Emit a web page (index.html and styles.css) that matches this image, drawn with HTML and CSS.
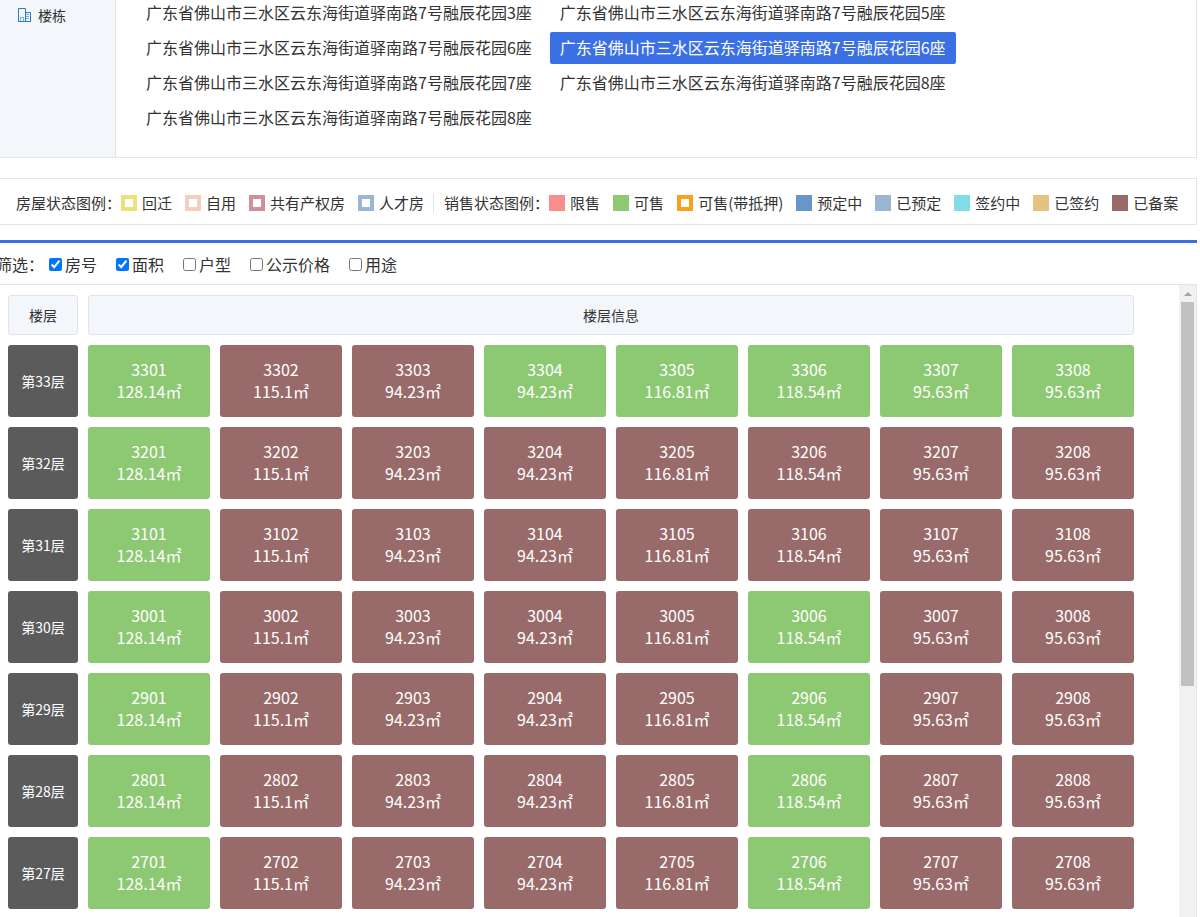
FILE: index.html
```html
<!DOCTYPE html>
<html lang="zh-CN">
<head>
    <meta charset="UTF-8">
    <meta name="viewport" content="width=device-width, initial-scale=1.0">
    <title>楼盘表</title>
    <link rel="stylesheet" href="styles.css">
</head>
<body>
    <section class="buildings">
        <div class="buildings-title">
            <svg class="icon" width="14" height="14" viewBox="0 0 14 14" fill="none" stroke="#2b7cc4" aria-hidden="true">
                <path d="M0.5 13.5V0.5H7.5V13.5M0 13.5H13M7.5 4.5H12.5V13.5"/>
                <path d="M2.5 13V9.5H5.5V13M8 6.5H11M8 8.5H11M8 10.5H11" stroke-opacity="0.6"/>
            </svg>
            <span>楼栋</span>
        </div>
        <nav class="building-list">
            <a href="#">广东省佛山市三水区云东海街道驿南路7号融辰花园3座</a>
            <a href="#">广东省佛山市三水区云东海街道驿南路7号融辰花园5座</a>
            <a href="#">广东省佛山市三水区云东海街道驿南路7号融辰花园6座</a>
            <a href="#" class="active">广东省佛山市三水区云东海街道驿南路7号融辰花园6座</a>
            <a href="#">广东省佛山市三水区云东海街道驿南路7号融辰花园7座</a>
            <a href="#">广东省佛山市三水区云东海街道驿南路7号融辰花园8座</a>
            <a href="#">广东省佛山市三水区云东海街道驿南路7号融辰花园8座</a>
        </nav>
    </section>

    <section class="legend">
        <div class="legend-group">
            <span>房屋状态图例：</span>
            <ul>
                <li><i class="swatch hollow moved-back"></i>回迁</li>
                <li><i class="swatch hollow self-use"></i>自用</li>
                <li><i class="swatch hollow shared"></i>共有产权房</li>
                <li><i class="swatch hollow talent"></i>人才房</li>
            </ul>
        </div>
        <div class="legend-group">
            <span>销售状态图例：</span>
            <ul>
                <li><i class="swatch limited"></i>限售</li>
                <li><i class="swatch on-sale"></i>可售</li>
                <li><i class="swatch hollow mortgaged"></i>可售(带抵押)</li>
                <li><i class="swatch booking"></i>预定中</li>
                <li><i class="swatch booked"></i>已预定</li>
                <li><i class="swatch signing"></i>签约中</li>
                <li><i class="swatch signed"></i>已签约</li>
                <li><i class="swatch filed"></i>已备案</li>
            </ul>
        </div>
    </section>

    <section class="rooms">
        <form class="filter">
            <span>筛选：</span>
            <label><input type="checkbox" checked>房号</label>
            <label><input type="checkbox" checked>面积</label>
            <label><input type="checkbox">户型</label>
            <label><input type="checkbox">公示价格</label>
            <label><input type="checkbox">用途</label>
        </form>
        <div class="scroll-area">
            <div class="table-wrap">
                <table>
                    <colgroup>
                        <col class="floor-col">
                        <col span="8">
                    </colgroup>
                    <thead>
                        <tr>
                            <th>楼层</th>
                            <th colspan="8">楼层信息</th>
                        </tr>
                    </thead>
                    <tbody id="floors"></tbody>
                </table>
            </div>
            <div class="scrollbar" aria-hidden="true">
                <div class="scroll-up"></div>
                <div class="scroll-thumb"></div>
            </div>
        </div>
    </section>

    <script>
        const areas = ['128.14', '115.1', '94.23', '94.23', '116.81', '118.54', '95.63', '95.63'];

        // Room positions still on sale, per floor
        const onSale = {
            33: [1, 4, 5, 6, 7, 8],
            32: [1],
            31: [1],
            30: [1, 6],
            29: [1, 6],
            28: [1, 6],
            27: [1, 6]
        };

        const floors = Object.keys(onSale).sort((a, b) => b - a);

        document.getElementById('floors').innerHTML = floors.map(floor => {
            const cells = areas.map((area, i) => {
                const status = onSale[floor].includes(i + 1) ? 'on-sale' : 'filed';
                return `<td class="${status}">${floor}0${i + 1}<br>${area}㎡</td>`;
            }).join('');
            return `<tr><th scope="row">第${floor}层</th>${cells}</tr>`;
        }).join('');
    </script>
</body>
</html>
```
FILE: styles.css
```css
* {
    margin: 0;
    padding: 0;
    box-sizing: border-box;
}

body {
    display: flex;
    flex-direction: column;
    min-height: 100vh;
    padding-right: 3px;
    overflow-x: hidden;
    font-family: "Noto Sans CJK SC", "Microsoft YaHei", sans-serif;
    font-size: 16px;
    color: #333;
    background: #fff;
}

a {
    color: inherit;
    text-decoration: none;
}

ul {
    list-style: none;
}

/* Building picker */
.buildings {
    display: flex;
    border: 1px solid #e4e4e4;
    border-width: 0 1px 1px 0;
}

.buildings-title {
    display: flex;
    align-items: flex-start;
    gap: 6px;
    width: 116px;
    padding: 8px 18px;
    font-size: 14px;
    line-height: 14px;
    background: #f3f6fb;
    border-right: 1px solid #e4e4e4;
}

.building-list {
    display: grid;
    grid-template-columns: max-content max-content;
    gap: 3px 8px;
    margin-top: -3px;
    padding: 0 20px 23px;
}

.building-list a {
    padding: 0 10px 2px;
    line-height: 30px;
    border-radius: 2px;
}

.building-list .active {
    color: #fff;
    background: #3a70e3;
}

/* Status legend */
.legend {
    display: flex;
    align-items: center;
    margin-top: 20px;
    padding: 14px 0 11px 16px;
    font-size: 15px;
    line-height: 20px;
    white-space: nowrap;
    border: 1px solid #e4e4e4;
    border-width: 1px 1px 1px 0;
}

.legend-group,
.legend-group ul,
.legend-group li {
    display: flex;
    align-items: center;
}

.legend-group ul {
    gap: 13px;
}

.legend-group li {
    gap: 5px;
}

.legend-group + .legend-group {
    margin-left: 9px;
    padding-left: 10px;
    border-left: 1px solid #e4e4e4;
}

.swatch {
    width: 16px;
    height: 16px;
}

.hollow {
    border: 4px solid;
}

.moved-back { border-color: #ede27a; }
.self-use { border-color: #f2cfbf; }
.shared { border-color: #d09098; }
.talent { border-color: #9bb5d5; }
.mortgaged { border-color: #f9a11f; }
.limited { background: #f98c8c; }
.on-sale { background: #8dc873; }
.booking { background: #6896c8; }
.booked { background: #9bb5d5; }
.signing { background: #80dde5; }
.signed { background: #e5c280; }
.filed { background: #986a6a; }

/* Room table */
.rooms {
    flex: 1;
    display: flex;
    flex-direction: column;
    margin-top: 15px;
    border-top: 3px solid #3a70e3;
}

.filter {
    display: flex;
    align-items: center;
    gap: 19px;
    margin-left: -4px;
    height: 42px;
    line-height: 24px;
    border-bottom: 1px solid #e4e4e4;
}

.filter span {
    margin-right: -14px;
}

.filter label {
    display: flex;
    align-items: center;
    gap: 3px;
}

.filter input {
    width: 13px;
    height: 13px;
    margin-top: 2px;
}

.scroll-area {
    flex: 1;
    display: flex;
    border-right: 1px solid #e4e4e4;
}

.table-wrap {
    flex: 1;
    margin: 0 35px 0 -2px;
}

table {
    width: 100%;
    table-layout: fixed;
    border-spacing: 10px;
    text-align: center;
}

.floor-col {
    width: 70px;
}

th {
    font-size: 14px;
    font-weight: normal;
    border-radius: 3px;
}

thead th {
    height: 40px;
    background: #f3f6fb;
    border: 1px solid #e4e4e4;
}

tbody th {
    color: #fff;
    background: #5b5b5b;
}

td {
    height: 72px;
    padding-bottom: 2px;
    line-height: 22px;
    color: #fff;
    border-radius: 3px;
}

.scrollbar {
    width: 17px;
    padding: 0 2px;
    background: #f1f1f1;
}

.scroll-up {
    display: flex;
    align-items: center;
    justify-content: center;
    height: 17px;
}

.scroll-up::before {
    content: "";
    border: 4px solid transparent;
    border-top-width: 0;
    border-bottom-color: #a3a3a3;
}

.scroll-thumb {
    height: 384px;
    background: #c1c1c1;
}
```
